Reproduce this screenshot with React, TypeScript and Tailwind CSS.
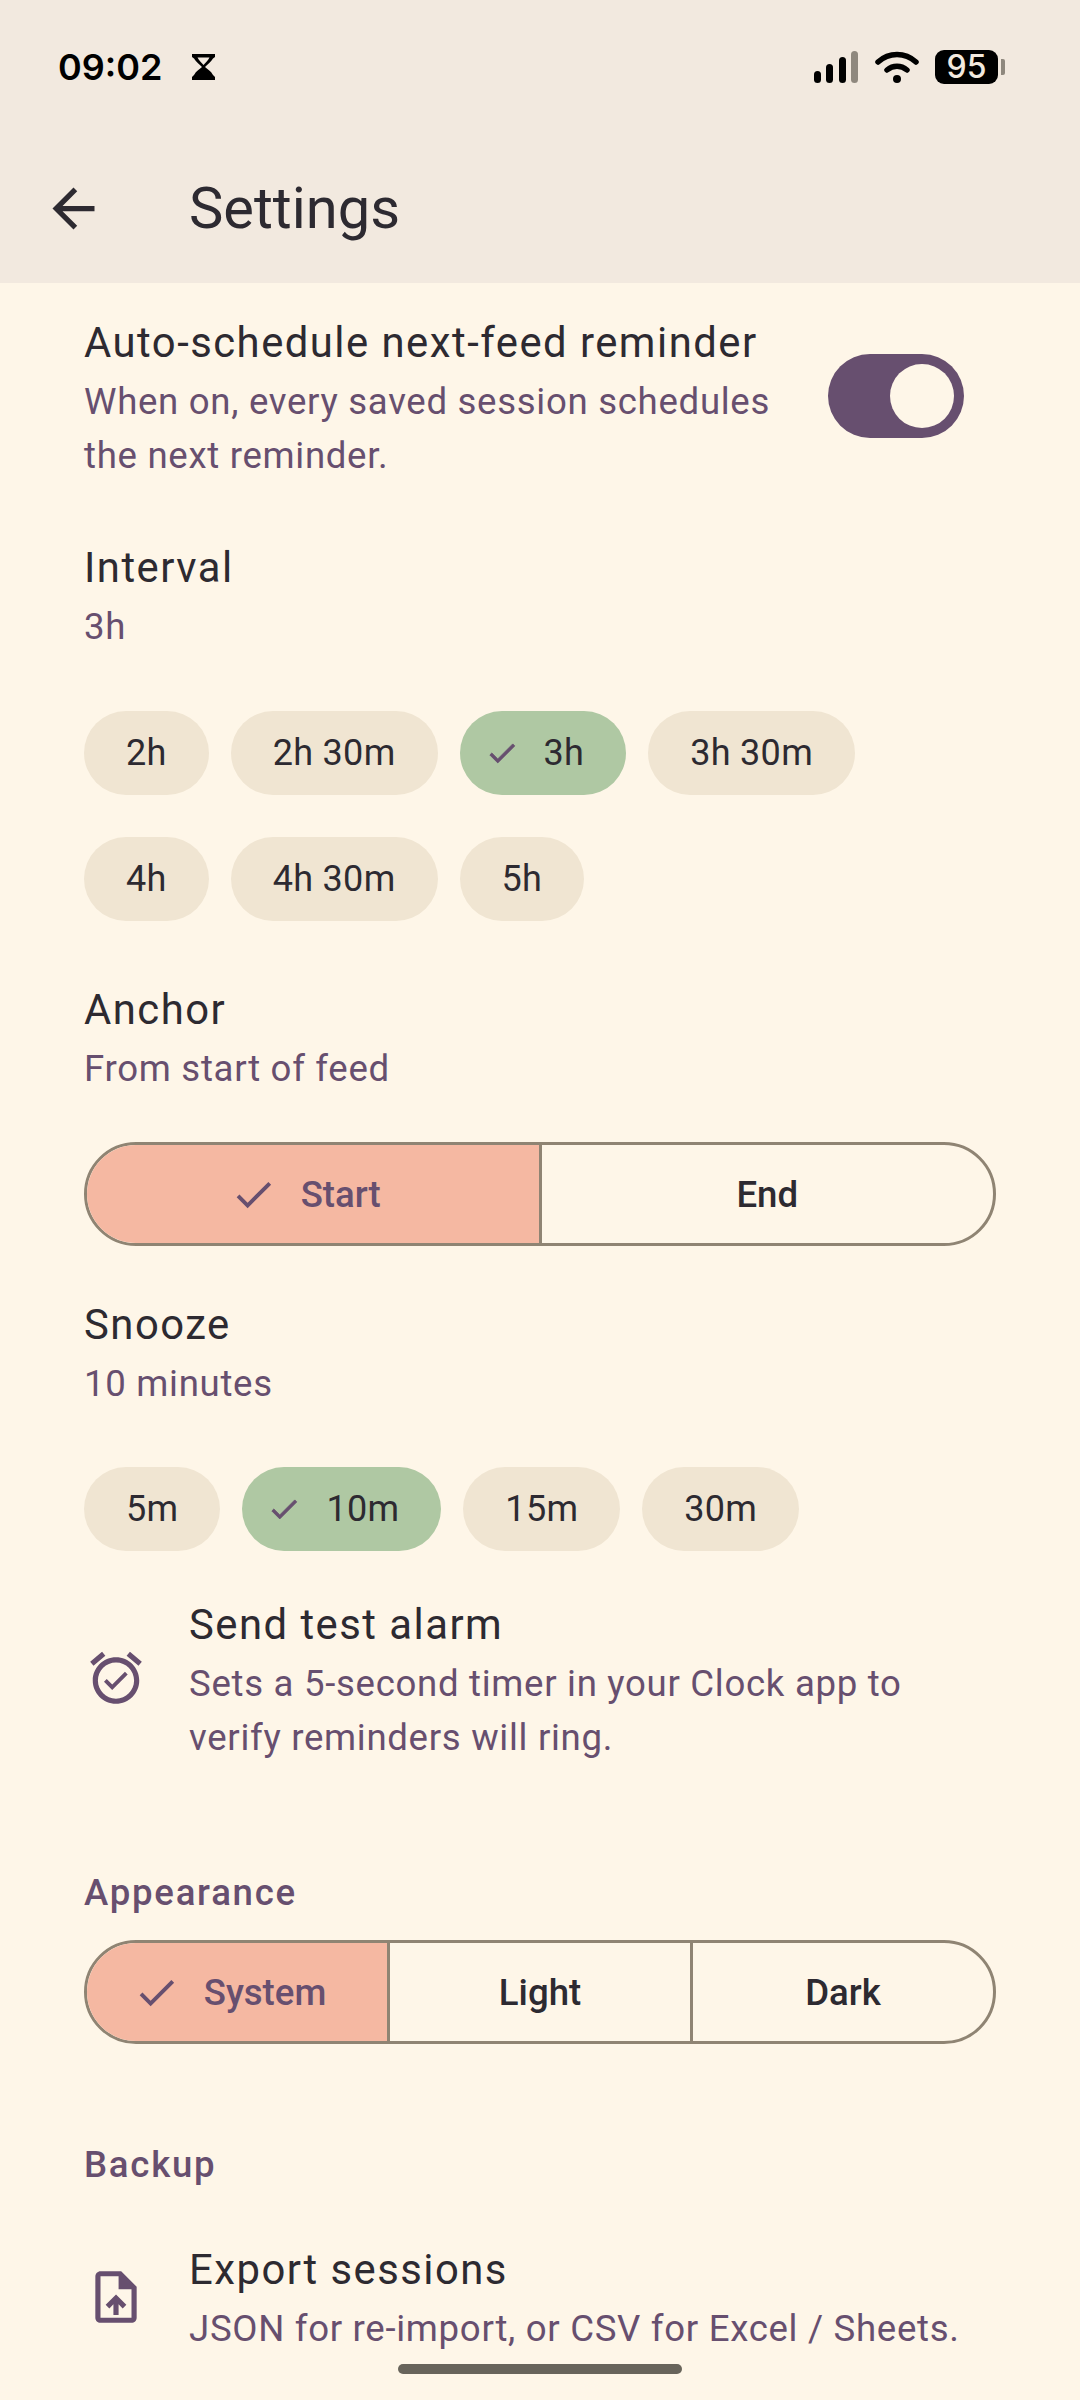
import React from 'react';

const ICON_CHECK = 'M9 16.17L4.83 12l-1.42 1.41L9 19 21 7l-1.41-1.41z';

function Check({ className }: { className: string }) {
  return (
    <svg viewBox="0 0 24 24" className={className} fill="currentColor">
      <path d={ICON_CHECK} />
    </svg>
  );
}

function Chip({ label, selected }: { label: string; selected?: boolean }) {
  if (selected) {
    return (
      <div className="flex h-[84px] items-center rounded-full bg-[#afc8a3] pl-[25px] pr-[42px] text-[#2d2a31]">
        <svg viewBox="0 0 24 24" className="h-[34px] w-[34px] text-[#674f6f]" fill="currentColor" stroke="currentColor" strokeWidth="0.6">
          <path d={ICON_CHECK} />
        </svg>
        <span className="ml-[25px]">{label}</span>
      </div>
    );
  }
  return (
    <div className="flex h-[84px] items-center rounded-full bg-[#f0e5d2] px-[42px] text-[#2d2a31]">
      {label}
    </div>
  );
}

function ChipRow({ children, className }: { children: React.ReactNode; className?: string }) {
  return (
    <div className={`flex gap-[22px] text-[36px] leading-[50px] tracking-[0.3px] ${className ?? ''}`}>{children}</div>
  );
}

function Title({ children }: { children: React.ReactNode }) {
  return <div className="h-[60px] text-[41.8px] leading-[63px] tracking-[1.49px] text-[#2d2a31]">{children}</div>;
}

function Sub({ children }: { children: React.ReactNode }) {
  return <div className="mb-[-1px] mt-[4px] text-[36.6px] leading-[54px] tracking-[0.7px] text-[#674f6f]">{children}</div>;
}

function Heading({ title, sub, className }: { title: string; sub: string; className?: string }) {
  return (
    <div className={className}>
      <Title>{title}</Title>
      <Sub>{sub}</Sub>
    </div>
  );
}

function Segmented({ items, className }: { items: string[]; className?: string }) {
  return (
    <div className={`flex h-[104px] overflow-hidden rounded-[52px] border-[3px] border-[#8f8473] text-[36.6px] font-medium ${className ?? ''}`}>
      {items.map((item, i) =>
        i === 0 ? (
          <div key={item} className="flex flex-1 items-center justify-center bg-[#f5b8a2] text-[#674f6f]">
            <Check className="h-[47px] w-[47px]" />
            <span className="ml-[24px] mr-[15px] pt-[2px]">{item}</span>
          </div>
        ) : (
          <div key={item} className="flex flex-1 items-center justify-center border-l-[3px] border-[#8f8473] pt-[2px] text-[#2d2a31]">
            {item}
          </div>
        ),
      )}
    </div>
  );
}

export default function App() {
  return (
    <div className="relative h-[2400px] w-[1080px] overflow-hidden bg-[#fef6e8] font-['Roboto',sans-serif]">
      <header className="h-[283px] bg-[#f2e9df]">
        <div className="flex h-[134px] items-center pl-[58px] pr-[82px]">
          <span className="font-['Inter',sans-serif] text-[36px] font-semibold tracking-[0px] text-black">09:02</span>
          <svg viewBox="0 0 25 26" className="ml-[29px] h-[26px] w-[25px]" fill="black">
            <path d="M1 0h23v3l-2 1.5C20 8 16 11 14 13c2 2 6 4 8 8l2 2v3H1v-3l2-2c2-4 6-6 8-8C9 11 5 8 3 4.500L1 3zM6.500 3.500C8 7 11 9 12.500 11 14 9 17 7 18.500 3.500z" fillRule="evenodd" />
          </svg>
          <svg viewBox="0 0 44 32" className="ml-auto h-[32px] w-[44px]">
            <rect x="0" y="20" width="7" height="12" rx="3.5" fill="black" />
            <rect x="12" y="13" width="7" height="19" rx="3.5" fill="black" />
            <rect x="25" y="6" width="7" height="26" rx="3.5" fill="black" />
            <rect x="37" y="0" width="7" height="32" rx="3.5" fill="#8f887e" />
          </svg>
          <svg viewBox="0 0 44 32" className="ml-[17px] h-[32px] w-[44px]" fill="none" stroke="black" strokeWidth="5.500" strokeLinecap="round">
            <path d="M3 11C14 1 30 1 41 11" />
            <path d="M12 19C18 14 26 14 32 19" />
            <circle cx="22" cy="28" r="4" fill="black" stroke="none" />
          </svg>
          <div className="relative ml-[16px] flex h-[34px] w-[63px] items-center justify-center rounded-[9px] bg-black font-['Inter',sans-serif] text-[32px] font-medium leading-none text-[#f2e9df]">
            95
            <div className="absolute left-[66px] top-[9px] h-[16px] w-[4px] rounded-r-[2px] bg-[#8f887e]" />
          </div>
        </div>
        <div className="flex h-[149px] items-center pl-[42px]">
          <svg viewBox="0 0 24 24" className="h-[63px] w-[63px] text-[#2d2a31]" fill="currentColor">
            <path d="M20 11H7.830l5.590-5.590L12 4l-8 8 8 8 1.410-1.410L7.830 13H20v-2z" />
          </svg>
          <h1 className="ml-[84px] text-[57.8px] font-normal leading-none text-[#2d2a31]">Settings</h1>
        </div>
      </header>

      <main className="px-[84px] pt-[28px]">
        <div className="flex items-center justify-between pr-[32px]">
          <div className="w-[700px]">
            <Title>Auto-schedule next-feed reminder</Title>
            <Sub>
              When on, every saved session schedules
              <br />
              the next reminder.
            </Sub>
          </div>
          <div className="mb-[2px] flex h-[84px] w-[136px] items-center justify-end rounded-full bg-[#674f6f] pr-[10px]">
            <div className="h-[64px] w-[64px] rounded-full bg-[#fef6e8]" />
          </div>
        </div>

        <Heading title="Interval" sub="3h" className="mt-[54px]" />
        <ChipRow className="mt-[58px]">
          <Chip label="2h" />
          <Chip label="2h 30m" />
          <Chip label="3h" selected />
          <Chip label="3h 30m" />
        </ChipRow>
        <ChipRow className="mt-[42px]">
          <Chip label="4h" />
          <Chip label="4h 30m" />
          <Chip label="5h" />
        </ChipRow>

        <Heading title="Anchor" sub="From start of feed" className="mt-[57px]" />
        <Segmented items={['Start', 'End']} className="mt-[47px]" />

        <Heading title="Snooze" sub="10 minutes" className="mt-[47px]" />
        <ChipRow className="mt-[57px]">
          <Chip label="5m" />
          <Chip label="10m" selected />
          <Chip label="15m" />
          <Chip label="30m" />
        </ChipRow>

        <div className="mt-[42px] flex items-center">
          <svg viewBox="0 0 24 24" className="mb-[2px] ml-[1px] h-[62px] w-[62px] shrink-0 text-[#674f6f]" fill="currentColor">
            <path d="M22 5.720l-4.600-3.860-1.290 1.530 4.600 3.860L22 5.720zM7.880 3.390L6.600 1.860 2 5.710l1.290 1.530 4.590-3.850zM12 4c-4.970 0-9 4.030-9 9s4.020 9 9 9c4.970 0 9-4.030 9-9s-4.030-9-9-9zm0 16c-3.870 0-7-3.130-7-7s3.130-7 7-7 7 3.130 7 7-3.130 7-7 7zm-1.460-5.470L8.410 12.400l-1.060 1.060 3.180 3.180 6-6-1.060-1.060-4.930 4.950z" />
          </svg>
          <div className="ml-[42px]">
            <Title>Send test alarm</Title>
            <Sub>
              Sets a 5-second timer in your Clock app to
              <br />
              verify reminders will ring.
            </Sub>
          </div>
        </div>

        <div className="mt-[103px] h-[50px] text-[36.6px] font-medium leading-[52px] tracking-[1.75px] text-[#674f6f]">Appearance</div>
        <Segmented items={['System', 'Light', 'Dark']} className="mt-[23px]" />

        <div className="mt-[95px] h-[50px] text-[36.6px] font-medium leading-[52px] tracking-[1.75px] text-[#674f6f]">Backup</div>

        <div className="mt-[49px] flex items-center">
          <svg viewBox="0 0 24 24" className="ml-[1px] h-[62px] w-[62px] shrink-0 text-[#674f6f]" fill="currentColor">
            <path d="M14 2H6c-1.100 0-1.990.9-1.990 2L4 20c0 1.100.89 2 1.990 2H18c1.100 0 2-.9 2-2V8l-6-6zm4 18H6V4h7v5h5v11zM8 15.010l1.410 1.410L11 14.840V19h2v-4.160l1.590 1.590L16 15.010 12.010 11 8 15.010z" />
          </svg>
          <div className="ml-[42px]">
            <Title>Export sessions</Title>
            <Sub>JSON for re-import, or CSV for Excel / Sheets.</Sub>
          </div>
        </div>
      </main>

      <div className="absolute bottom-[26px] left-[398px] h-[10px] w-[284px] rounded-full bg-[#68645b]" />
    </div>
  );
}
